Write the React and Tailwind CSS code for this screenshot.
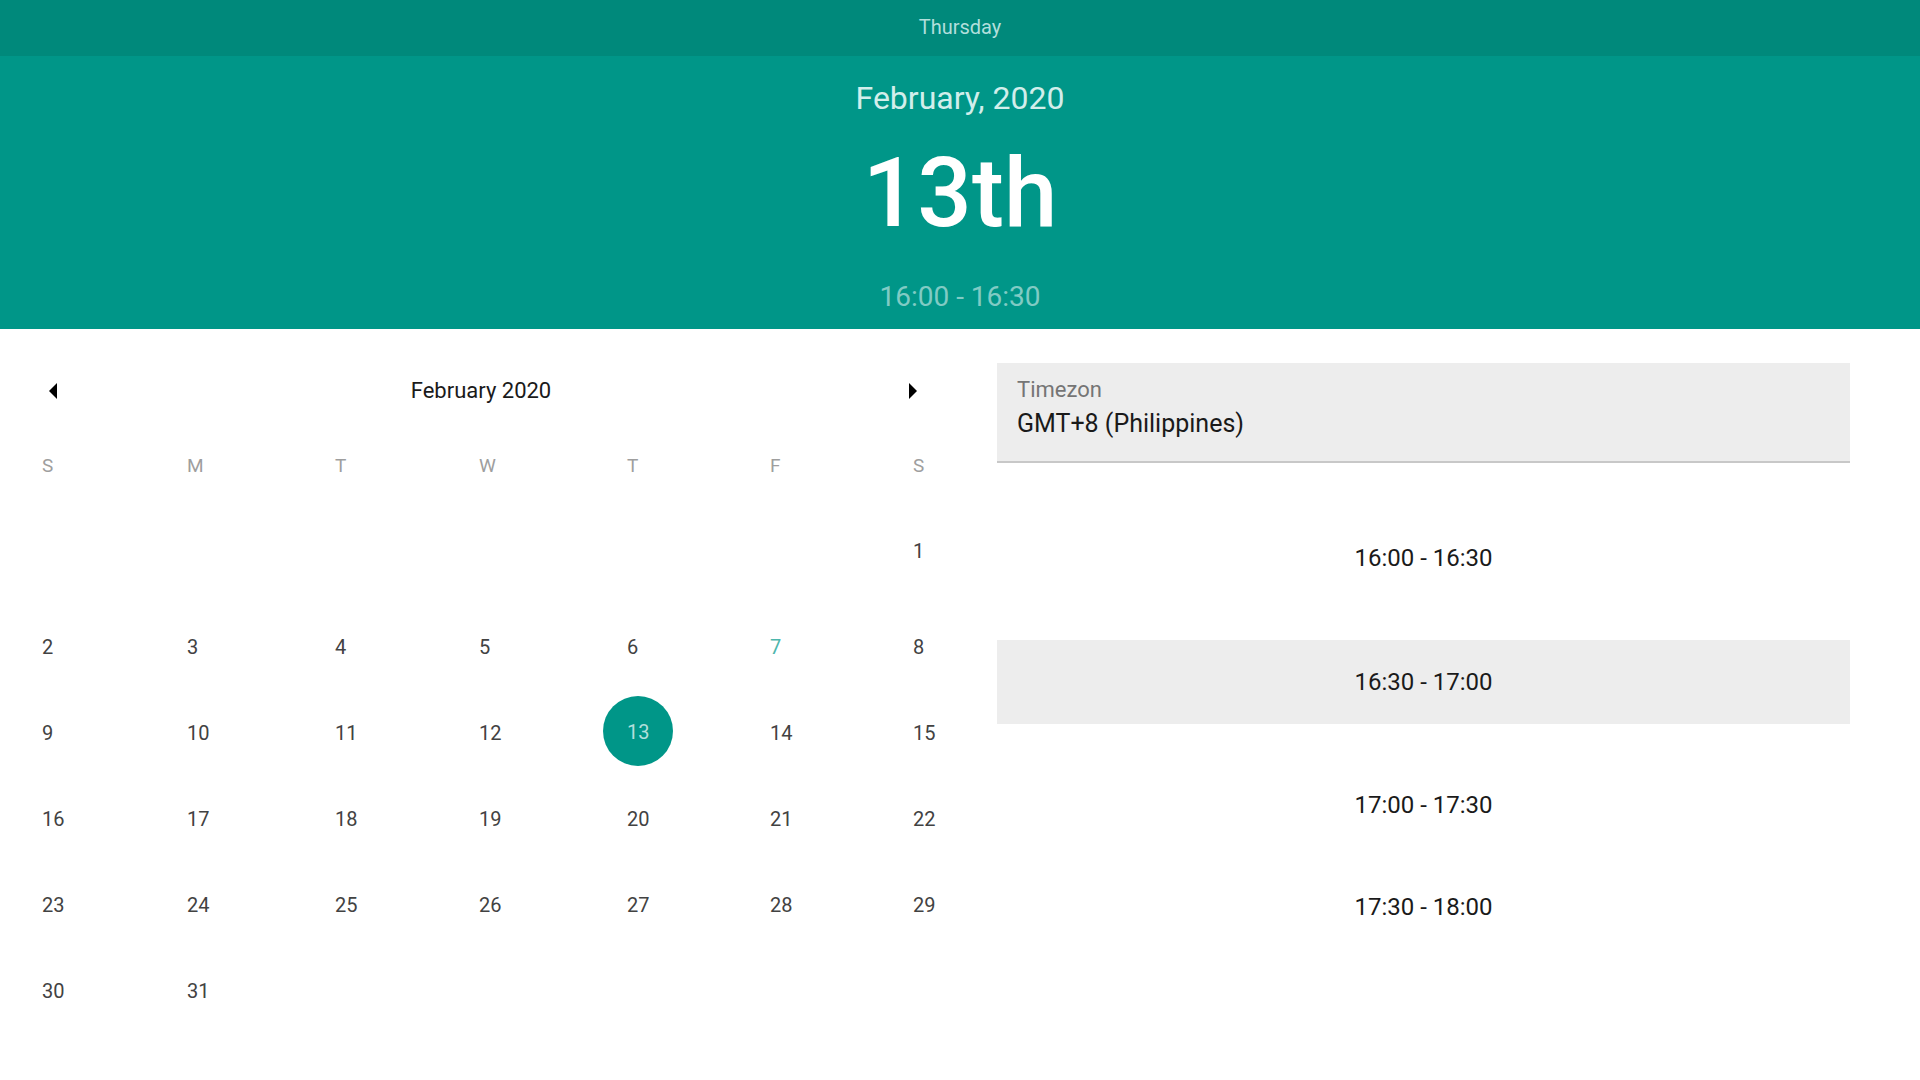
import React from "react";

const rows = [
  ["", "", "", "", "", "", "1"],
  ["2", "3", "4", "5", "6", "7", "8"],
  ["9", "10", "11", "12", "13", "14", "15"],
  ["16", "17", "18", "19", "20", "21", "22"],
  ["23", "24", "25", "26", "27", "28", "29"],
  ["30", "31", "", "", "", "", ""],
];

const gridCls =
  "grid grid-cols-[145px_148px_144px_148px_143px_143px_53px] pl-[42px] h-[86px] items-center";

function Day({ d }) {
  if (!d) return <div />;
  if (d === "13") {
    return (
      <div>
        <span className="relative inline-block text-[20px] leading-[20px] text-[#b2dfdb]">
          <span className="absolute left-1/2 top-1/2 -translate-x-1/2 -translate-y-1/2 w-[70px] h-[70px] rounded-full bg-[#009688]" />
          <span className="relative top-[1px]">{d}</span>
        </span>
      </div>
    );
  }
  return (
    <div
      className={
        "text-[20px] leading-[20px] " +
        (d === "7" ? "text-[#4db6ac]" : "text-[#424242]")
      }
    >
      {d}
    </div>
  );
}

export default function App() {
  const slots = [
    { t: "16:00 - 16:30", mt: "mt-[53px]", sel: false },
    { t: "16:30 - 17:00", mt: "mt-[40px]", sel: true },
    { t: "17:00 - 17:30", mt: "mt-[39px]", sel: false },
    { t: "17:30 - 18:00", mt: "mt-[18px]", sel: false },
  ];
  return (
    <div className="w-[1920px] h-[1080px] bg-white overflow-hidden font-[Roboto,sans-serif]">
      <div className="h-[56px] bg-[#00897b] flex items-center justify-center pb-[2px] text-[20px] leading-[20px] text-[#b2dfdb]">
        Thursday
      </div>
      <div className="h-[273px] bg-[#009688] flex flex-col items-center pt-[26px]">
        <div className="text-[32px] leading-[32px] text-[#d2eeeb]">February, 2020</div>
        <div className="mt-[31px] text-[96px] leading-[96px] font-medium text-white">13th</div>
        <div className="mt-[42px] text-[28px] leading-[28px] text-[#80cbc4]">16:00 - 16:30</div>
      </div>
      <div className="flex">
        <div className="w-[966px] pt-[34px]">
          <div className="h-[56px] flex items-center px-[49px]">
            <svg width="8" height="16" viewBox="0 0 8 16">
              <path d="M8 0 L0 8 L8 16 Z" fill="#000" />
            </svg>
            <div className="flex-1 text-center pr-[4px] text-[22px] leading-[22px] text-[#1a1a1a]">
              February 2020
            </div>
            <svg width="8" height="16" viewBox="0 0 8 16">
              <path d="M0 0 L8 8 L0 16 Z" fill="#000" />
            </svg>
          </div>
          <div className={gridCls + " mt-[3px]"}>
            {["S", "M", "T", "W", "T", "F", "S"].map((w, i) => (
              <div key={i} className="text-[19px] leading-[19px] text-[#9e9e9e]">
                {w}
              </div>
            ))}
          </div>
          {rows.map((r, ri) => (
            <div key={ri} className={gridCls + (ri === 0 ? " mb-[10px]" : "")}>
              {r.map((d, di) => (
                <Day key={di} d={d} />
              ))}
            </div>
          ))}
        </div>
        <div className="ml-[31px] w-[853px] pt-[34px] flex flex-col">
          <div className="h-[100px] bg-[#ededed] border-b-[2px] border-[#c8c8c8] pt-[16px] pl-[20px]">
            <div className="text-[22px] leading-[22px] text-[#757575]">Timezon</div>
            <div className="mt-[10px] text-[25px] leading-[25px] text-[#1a1a1a]">
              GMT+8 (Philippines)
            </div>
          </div>
          {slots.map((s, i) => (
            <div
              key={i}
              className={
                s.mt +
                " h-[84px] flex items-center justify-center text-[24px] leading-[24px] text-[#1a1a1a] " +
                (s.sel ? "bg-[#ededed]" : "")
              }
            >
              {s.t}
            </div>
          ))}
        </div>
      </div>
    </div>
  );
}
